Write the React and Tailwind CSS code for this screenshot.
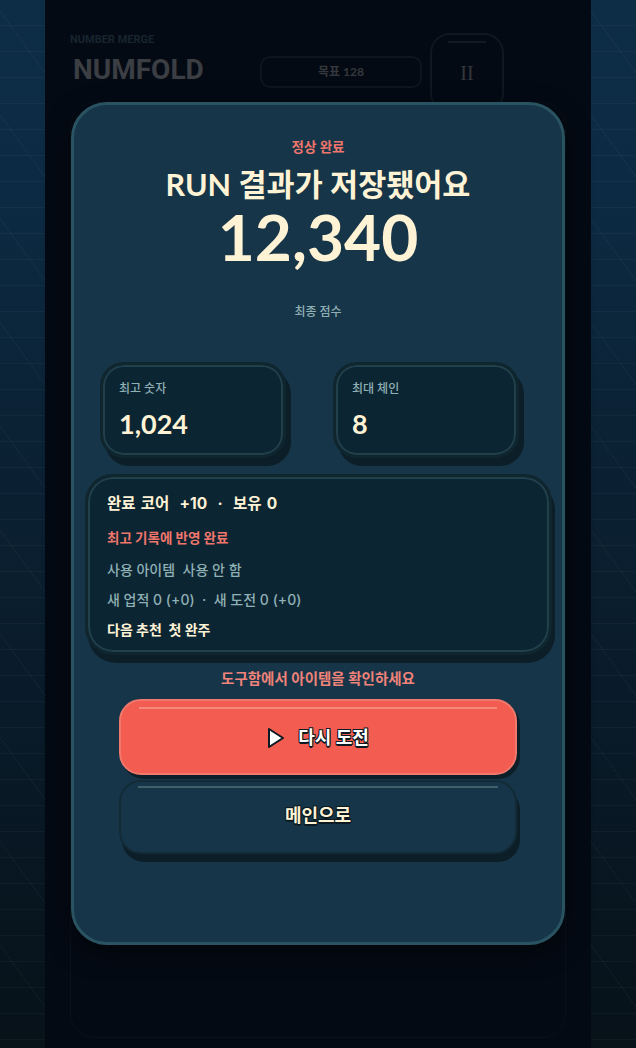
const FONT = "font-['Lato','Noto_Sans_CJK_KR',sans-serif]";

const outline =
  "[text-shadow:1px_1px_0_#0b1a22,-1px_1px_0_#0b1a22,1px_-1px_0_#0b1a22,-1px_-1px_0_#0b1a22,0_2px_0_#0b1a22]";

const StatCard = ({ label, value }) => (
  <div className="w-[186px] h-[96px] rounded-[24px] border-[3px] border-[#10262f] bg-[#0c2533] shadow-[inset_0_0_0_2px_#21404c,5px_8px_0_#0c1f29] px-[16px] pt-[14px]">
    <div className="text-[12px] leading-[20px] font-medium text-[#8fb0b4]">{label}</div>
    <div className="mt-[7px] text-[27px] leading-[36px] font-bold text-[#fff3d6]">{value}</div>
  </div>
);

const PanelRow = ({ className, children }) => <div className={className}>{children}</div>;

const Side = () => (
  <div className="w-[45px] shrink-0 h-full bg-[repeating-linear-gradient(54deg,transparent_0,transparent_60px,rgba(255,255,255,0.03)_60px,rgba(255,255,255,0.03)_61px),repeating-linear-gradient(180deg,transparent_0,transparent_25px,rgba(255,255,255,0.03)_25px,rgba(255,255,255,0.03)_26px),linear-gradient(180deg,#0d2d47_0%,#0c2a42_20%,#0b2235_40%,#091a28_70%,#071219_100%)]" />
);

export default function App() {
  return (
    <div className={`relative w-[636px] h-[1048px] overflow-hidden flex bg-[#030a13] ${FONT}`}>
      <Side />

      {/* game screen behind the modal */}
      <div className="flex-1 h-full bg-[#040a14] px-[25px] flex flex-col">
        <div className="flex items-start h-[102px] pt-[33px]">
          <div className="w-[190px] shrink-0">
            <div className="text-[11px] leading-[13px] font-bold text-[#18242f] font-['Roboto',sans-serif]">NUMBER MERGE</div>
            <div className="mt-[7px] ml-[3px] text-[28px] leading-[34px] font-bold text-[#3b3e42] font-['Roboto',sans-serif]">NUMFOLD</div>
          </div>
          <div className="w-[162px] h-[32px] mt-[23px] rounded-[10px] border-2 border-[#0c1520] flex items-center justify-center text-[12px] font-bold text-[#34383c]">
            목표 128
          </div>
          <div className="relative w-[74px] h-[80px] ml-[8px] rounded-[20px] border-2 border-[#10171f] flex items-center justify-center text-[20px] text-[#34383c] font-['Liberation_Serif',serif]">
            <span className="absolute top-[6px] left-[16px] right-[16px] h-[2px] bg-[#141a21]" />
            II
          </div>
        </div>
        <div className="flex-1 mb-[10px] rounded-[24px] border border-[#0a1119]" />
      </div>

      <Side />

      {/* result modal */}
      <div className="absolute left-[71px] top-[102px] w-[494px] h-[843px] rounded-[36px] border-[3px] border-[#2a5361] bg-[#173548] shadow-[0_8px_24px_rgba(0,0,0,0.5)] flex flex-col items-center pt-[32px]">
        <div className="text-[13.5px] leading-[20px] font-bold text-[#f0766c]">정상 완료</div>
        <h1 className="mt-[7px] text-[30.5px] leading-[40px] font-bold text-[#fff3d6]">RUN 결과가 저장됐어요</h1>
        <div className="mt-[3px] text-[64px] leading-[60px] font-bold text-[#fff3d6]">12,340</div>
        <div className="mt-[36px] text-[12px] leading-[18px] font-medium text-[#8fb0b4]">최종 점수</div>

        <div className="mt-[41px] self-start ml-[26px] w-[419px] flex justify-between">
          <StatCard label="최고 숫자" value="1,024" />
          <StatCard label="최대 체인" value="8" />
        </div>

        <div className="mt-[16px] self-start ml-[11px] w-[467px] h-[181px] rounded-[28px] border-[3px] border-[#10262f] bg-[#0c2533] shadow-[inset_0_0_0_2px_#21404c,3px_8px_0_#0c1f29] pl-[19px] pt-[16px] font-['Inter','Noto_Sans_CJK_KR',sans-serif]">
          <PanelRow className="text-[15.5px] leading-[22px] font-bold text-[#fff3d6] whitespace-pre [word-spacing:1.5px]">완료 코어  +10  ·  보유 0</PanelRow>
          <PanelRow className="mt-[14px] text-[13.5px] leading-[18px] font-bold text-[#f0766c]">최고 기록에 반영 완료</PanelRow>
          <PanelRow className="mt-[14px] text-[14px] leading-[18px] font-medium text-[#8fb0b4] whitespace-pre">사용 아이템  사용 안 함</PanelRow>
          <PanelRow className="mt-[12px] text-[14px] leading-[18px] font-medium text-[#8fb0b4] whitespace-pre">새 업적 0 (+0)  ·  새 도전 0 (+0)</PanelRow>
          <PanelRow className="mt-[12px] text-[14px] leading-[18px] font-bold text-[#fff3d6] whitespace-pre">다음 추천  첫 완주</PanelRow>
        </div>

        <div className="mt-[13px] text-[14.5px] leading-[22px] font-bold text-[#f0837a]">도구함에서 아이템을 확인하세요</div>

        <button className="relative mt-[9px] w-[398px] h-[76px] rounded-[22px] border-2 border-[#f0786c] bg-[#f35c50] shadow-[3px_4px_0_#0c1f29] flex items-center justify-center gap-[13px] pb-[1px]">
          <span className="absolute top-[6px] left-[18px] right-[18px] h-[2px] bg-[#f7867b]" />
          <svg width="18" height="22" viewBox="0 0 18 22" className="mt-[2px]">
            <path d="M2 2 L16 11 L2 20 Z" fill="#fff" stroke="#0b1a22" strokeWidth="2" strokeLinejoin="round" />
          </svg>
          <span className={`text-[18px] leading-[26px] font-bold text-white ${outline}`}>다시 도전</span>
        </button>

        <button className="relative mt-[5px] w-[398px] h-[74px] rounded-[22px] border-2 border-[#122b37] bg-[#173548] shadow-[3px_8px_0_#0c1f29] flex items-center justify-center pb-[4px]">
          <span className="absolute top-[4px] left-[17px] right-[17px] h-[2px] bg-[#41606b]" />
          <span className={`text-[18px] leading-[26px] font-bold text-[#fff3d6] ${outline}`}>메인으로</span>
        </button>
      </div>
    </div>
  );
}
